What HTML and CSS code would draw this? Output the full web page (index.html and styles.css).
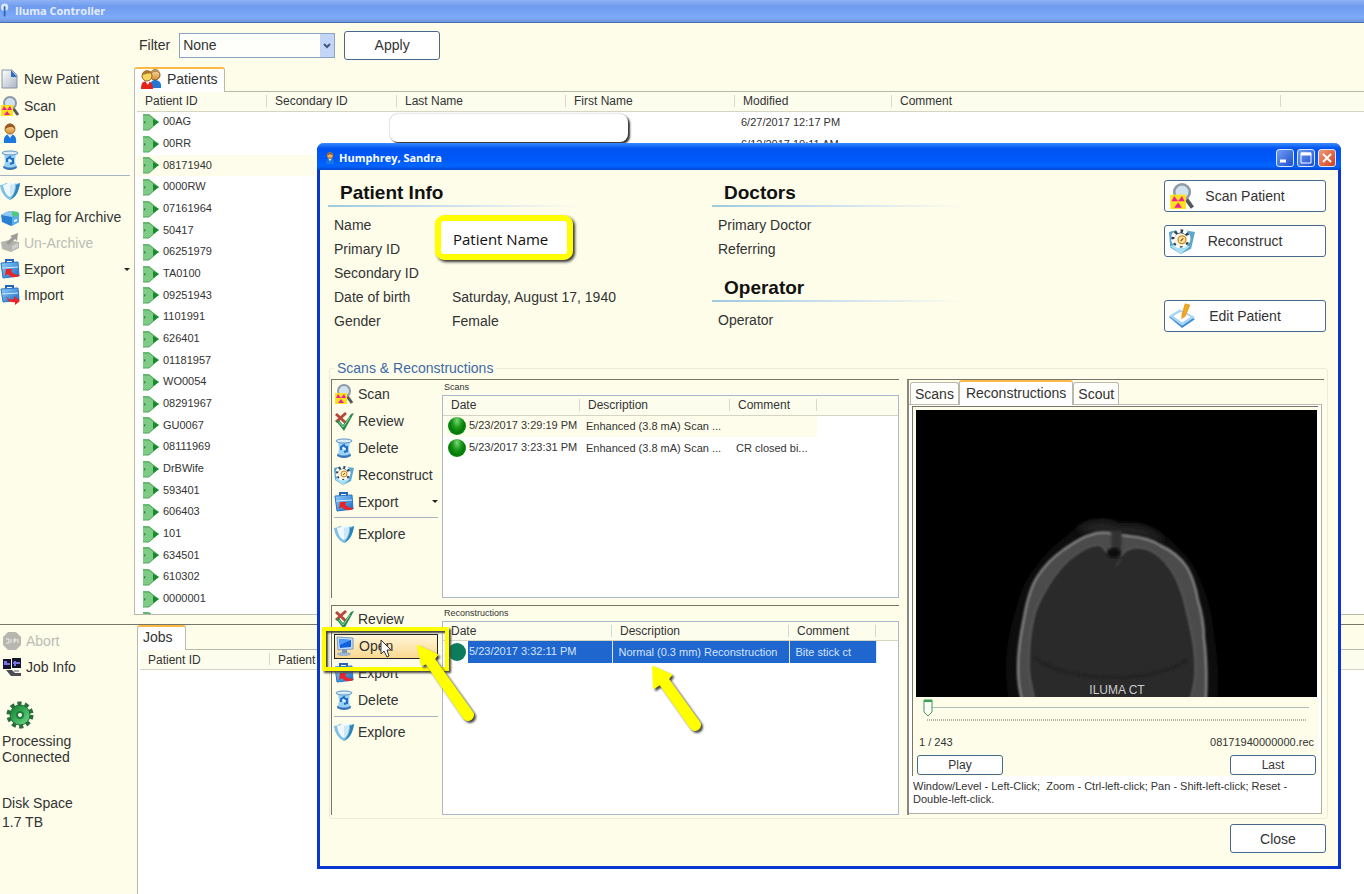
FILE: index.html
```html
<!DOCTYPE html>
<html lang="en">
<head>
  <meta charset="UTF-8">
  <meta name="viewport" content="width=device-width, initial-scale=1.0">
  <title>Iluma Controller</title>
  <link rel="stylesheet" href="styles.css">
</head>
<body>
  <!-- Icon set -->
  <svg class="sprite" aria-hidden="true">
    <defs>
      <linearGradient id="gBlue" x1="0" y1="0" x2="1" y2="1"><stop offset="0" stop-color="#8fd0fb"/><stop offset="1" stop-color="#1668c4"/></linearGradient>
      <linearGradient id="gPale" x1="0" y1="0" x2="1" y2="1"><stop offset="0" stop-color="#ffffff"/><stop offset="1" stop-color="#a9b4c4"/></linearGradient>
      <linearGradient id="gGreen" x1="0" y1="0" x2="1" y2="1"><stop offset="0" stop-color="#0b7a2c"/><stop offset="1" stop-color="#6fe08a"/></linearGradient>
      <linearGradient id="gFace" x1="0" y1="0" x2="0" y2="1"><stop offset="0" stop-color="#fbe0a8"/><stop offset="1" stop-color="#d98e33"/></linearGradient>
      <symbol id="i-new" viewBox="0 0 20 20">
        <path d="M2 1h10l5 5v13H2z" fill="url(#gPale)" stroke="#8c95a5"/>
        <path d="M11 1l6 7h-6z" fill="#2c6fc0"/>
      </symbol>
      <symbol id="i-scan" viewBox="0 0 20 20">
        <path d="M13 12l5 7" stroke="#55565a" stroke-width="3"/>
        <circle cx="10" cy="7" r="6" fill="#cfe2ee" stroke="#8e9aa6" stroke-width="2"/>
        <path d="M1 9h12v11H1z" fill="#ffe21a"/>
        <path d="M2 14l2-4 3 4zM12 14l-2-4-3 4zM4 19l3-4 3 4z" fill="#f01e9a"/>
      </symbol>
      <symbol id="i-person" viewBox="0 0 20 20">
        <path d="M4 20c-1-6 2-9 6-9s7 3 6 9z" fill="#1c78dc"/>
        <path d="M7 11l3 4 3-4z" fill="#e6f2fc"/>
        <circle cx="10" cy="6" r="5" fill="url(#gFace)" stroke="#a0672a"/>
        <path d="M5 6c0-7 10-7 10 0-3-3-6-2-10 0z" fill="#9a5a22"/>
      </symbol>
      <symbol id="i-patients" viewBox="0 0 22 22">
        <path d="M10 20c0-6 2-8 5-8s7 2 6 8z" fill="#2277d4"/>
        <circle cx="15" cy="7" r="5" fill="url(#gFace)" stroke="#7d5426"/>
        <path d="M10 6c1-7 10-6 10 0-3-3-6-2-10 0z" fill="#b9925a"/>
        <path d="M1 21c0-6 2-8 6-8s6 3 6 8z" fill="#e32219"/>
        <path d="M5 13l3 4 2-4z" fill="#fff"/>
        <circle cx="7" cy="8" r="5" fill="#f9d560" stroke="#8a6420"/>
        <path d="M2 7c1-7 10-5 10-1-3-1-6 0-10 1z" fill="#a8762c"/>
      </symbol>
      <symbol id="i-trash" viewBox="0 0 20 20">
        <ellipse cx="10" cy="17" rx="7" ry="3" fill="#3a74b8"/>
        <path d="M4 4h12l-1 7 1 5c-3 2-9 2-12 0l1-5z" fill="#9ad2f5"/>
        <ellipse cx="10" cy="3" rx="8" ry="2" fill="#d8ecf8" stroke="#5a94c4"/>
        <path d="M7 12V9l3-2 1 2h2v4l-3 1" stroke="#1f6fc4" stroke-width="2" fill="none"/>
        <path d="M9 10l2 1" stroke="#fff" stroke-width="2" fill="none"/>
      </symbol>
      <symbol id="i-explore" viewBox="0 0 20 20">
        <path d="M0 4c3 0 4-1 6-2h8c2 1 3 1 6 0-1 8-4 14-10 17C4 16 1 11 0 4z" fill="#7fc0e4"/>
        <path d="M3 4c2 0 3-1 5-2h7c0 6-1 11-5 14C6 14 4 10 3 4z" fill="#eef8fe"/>
        <path d="M10 4l5-1c0 5-2 9-5 12z" fill="#cde7f6"/>
        <path d="M16 4l4-2c-1 8-4 14-10 17 4-5 6-9 6-15z" fill="#2c84b8"/>
      </symbol>
      <symbol id="i-flag" viewBox="0 0 20 20">
        <path d="M1 8l8-4 10 2v9l-8 4-9-4z" fill="#2b7fd2"/>
        <path d="M1 8l8-4 10 2-7 4z" fill="#8dcaf6"/>
        <path d="M12 10l7-4v9l-7 4z" fill="#5aaee9"/>
        <path d="M12 4l6 1v4l-3 1-3-2z" fill="#4fc97a"/>
        <path d="M14 13l3-1v2l-3 1z" fill="#eaf7ff"/>
      </symbol>
      <symbol id="i-unarchive" viewBox="0 0 20 20">
        <path d="M1 9l8-2 10 2v6l-8 4-9-3z" fill="#b4b4ae"/>
        <path d="M6 10l6-6-2-1 8-3-1 8-2-2-6 6z" fill="#9d9d98"/>
        <path d="M12 13l6-3v4l-6 3z" fill="#cfcfc9"/>
      </symbol>
      <symbol id="i-export" viewBox="0 0 20 20">
        <path d="M6 4V1h7v3" fill="none" stroke="#2566b4" stroke-width="2"/>
        <path d="M1 4l17-1 1 14-16 2z" fill="url(#gBlue)" stroke="#2874c8"/>
        <path d="M2 9l16-1" stroke="#cfeaff"/>
        <path d="M6 10h7l-2 2c2 3 5 4 9 4-5 4-10 2-12-1l-3 2z" fill="#ea2424"/>
      </symbol>
      <symbol id="i-import" viewBox="0 0 20 20">
        <path d="M6 4V1h7v3" fill="none" stroke="#2566b4" stroke-width="2"/>
        <path d="M1 4l17-1 1 12-16 2z" fill="url(#gBlue)" stroke="#2874c8"/>
        <path d="M2 9l16-1" stroke="#cfeaff"/>
        <path d="M6 11c2 3 4 4 8 3v-3l6 5-5 4v-3c-5 1-8-2-9-6z" fill="#ea2424"/>
      </symbol>
      <symbol id="i-review" viewBox="0 0 20 20">
        <path d="M2 3l11 10M12 2L2 11" stroke="#b8463a" stroke-width="3" fill="none"/>
        <path d="M2 10l3-1 4 5L17 3l3-1L10 20z" fill="#2a8c4c"/>
        <path d="M5 11l4 5 7-10" stroke="#8ed6a0" stroke-width="1" fill="none"/>
      </symbol>
      <symbol id="i-reconstruct" viewBox="0 0 20 20">
        <path d="M0 3l8-2 12 2-3 13-8 4-8-5z" fill="#5aa6cc"/>
        <path d="M1 14l6-2 9 2-7 6z" fill="#a9e0f4"/>
        <circle cx="9" cy="8" r="7" fill="#2f3e48"/>
        <circle cx="9" cy="8" r="6" fill="none" stroke="#fff" stroke-width="3" stroke-dasharray="3 2"/>
        <circle cx="9" cy="9" r="5" fill="#f8f6ec"/>
        <circle cx="10" cy="9" r="3" fill="#fbe4a6" stroke="#d08a1e" stroke-width="1"/>
        <path d="M9 10l2-2" stroke="#8a5a10"/>
      </symbol>
      <symbol id="i-monitor" viewBox="0 0 20 20">
        <ellipse cx="9" cy="18" rx="7" ry="2" fill="#9db4cc"/>
        <path d="M7 13h5v4H7z" fill="#7a93b4"/>
        <path d="M2 1l16 1v11L3 14z" fill="#c4daf2" stroke="#7c9cc4"/>
        <path d="M4 3l12 1v7L5 12z" fill="#1060e0"/>
        <path d="M4 3l12 1-11 5z" fill="#4f9cf6"/>
      </symbol>
      <symbol id="i-edit" viewBox="0 0 24 24">
        <path d="M0 13l10-6 14 8-12 8z" fill="#3f8cd8"/>
        <path d="M0 12l10-6 14 7-12 8z" fill="#a8d4f6"/>
        <path d="M4 12l7-4 9 5-8 5z" fill="#fff"/>
        <path d="M15 1l4 1-4 10-3 2v-3z" fill="#f4a91c" stroke="#e0a030"/>
      </symbol>
      <symbol id="i-abort" viewBox="0 0 20 20">
        <path d="M6 1h8l5 5v8l-5 5H6l-5-5V6z" fill="#b7b7b0"/>
        <path d="M4 8h3v4H4M9 8v4M12 12V8h2v2h-2M16 12V8" stroke="#ecece4" fill="none"/>
      </symbol>
      <symbol id="i-job" viewBox="0 0 20 20">
        <path d="M1 2h8v10H1zM10 1h9v10h-9z" fill="#15152c"/>
        <path d="M2 7h6M2 5h3M11 6h7M13 4v5" stroke="#7672e8" stroke-width="2"/>
        <path d="M4 13h6l3 3h6v3H9z" fill="#4c4c54"/>
        <path d="M12 13h5v2h-5z" fill="#a8a8b0"/>
      </symbol>
      <symbol id="i-gear" viewBox="0 0 28 28">
        <circle cx="14" cy="14" r="11" fill="none" stroke="#2c6b3c" stroke-width="5" stroke-dasharray="4 3"/>
        <circle cx="14" cy="14" r="10" fill="url(#gGreen)" stroke="#1e6e34"/>
        <circle cx="14" cy="14" r="3" fill="#fff" stroke="#1d7c36" stroke-width="2"/>
      </symbol>
      <symbol id="i-play" viewBox="0 0 16 17">
        <path d="M0 0h6l10 8-10 8H0z" fill="#7ecb86"/>
        <path d="M0 1h6l9 7-9 8H0" fill="none" stroke="#4fa65c"/>
        <path d="M10 5l6 3-6 4z" fill="#168a2c"/>
        <path d="M1 7l2 1-2 2z" fill="#2f8f40"/>
      </symbol>
    </defs>
  </svg>

  <div class="app">
    <header class="app-title">
      <svg class="title-icon" viewBox="0 0 12 16"><circle cx="5" cy="5" r="4" fill="#d7ebff"/><path d="M5 4v11" stroke="#3567b8" stroke-width="2"/></svg>
      <span>Iluma Controller</span>
    </header>

    <section class="pane pane-top">
      <nav class="sidebar">
        <button class="tool"><svg><use href="#i-new"/></svg>New Patient</button>
        <button class="tool"><svg><use href="#i-scan"/></svg>Scan</button>
        <button class="tool"><svg><use href="#i-person"/></svg>Open</button>
        <button class="tool"><svg><use href="#i-trash"/></svg>Delete</button>
        <hr class="tool-sep">
        <button class="tool tight"><svg><use href="#i-explore"/></svg>Explore</button>
        <button class="tool tight"><svg><use href="#i-flag"/></svg>Flag for Archive</button>
        <button class="tool tight" disabled><svg><use href="#i-unarchive"/></svg>Un-Archive</button>
        <button class="tool tight has-menu"><svg><use href="#i-export"/></svg>Export</button>
        <button class="tool tight"><svg><use href="#i-import"/></svg>Import</button>
      </nav>
      <main class="patients">
        <div class="filter-bar">
          <label for="filter">Filter</label>
          <select id="filter" class="filter-select"><option>None</option></select>
          <button class="btn btn-apply">Apply</button>
        </div>
        <div class="tabs">
          <button class="tab active tab-patients"><svg><use href="#i-patients"/></svg>Patients</button>
        </div>
        <div class="list-wrap">
          <table class="list patient-list">
            <colgroup><col class="w130"><col class="w130"><col class="w169"><col class="w169"><col class="w157"><col class="w389"><col></colgroup>
            <thead>
              <tr><th>Patient ID</th><th>Secondary ID</th><th>Last Name</th><th>First Name</th><th>Modified</th><th>Comment</th><th></th></tr>
            </thead>
            <tbody>
              <tr><td><svg><use href="#i-play"/></svg>00AG</td><td></td><td></td><td></td><td>6/27/2017 12:17 PM</td><td></td><td></td></tr>
              <tr><td><svg><use href="#i-play"/></svg>00RR</td><td></td><td></td><td></td><td>6/12/2017 10:11 AM</td><td></td><td></td></tr>
              <tr class="current"><td><svg><use href="#i-play"/></svg>08171940</td><td></td><td></td><td></td><td></td><td></td><td class="rest"></td></tr>
              <tr><td><svg><use href="#i-play"/></svg>0000RW</td></tr>
              <tr><td><svg><use href="#i-play"/></svg>07161964</td></tr>
              <tr><td><svg><use href="#i-play"/></svg>50417</td></tr>
              <tr><td><svg><use href="#i-play"/></svg>06251979</td></tr>
              <tr><td><svg><use href="#i-play"/></svg>TA0100</td></tr>
              <tr><td><svg><use href="#i-play"/></svg>09251943</td></tr>
              <tr><td><svg><use href="#i-play"/></svg>1101991</td></tr>
              <tr><td><svg><use href="#i-play"/></svg>626401</td></tr>
              <tr><td><svg><use href="#i-play"/></svg>01181957</td></tr>
              <tr><td><svg><use href="#i-play"/></svg>WO0054</td></tr>
              <tr><td><svg><use href="#i-play"/></svg>08291967</td></tr>
              <tr><td><svg><use href="#i-play"/></svg>GU0067</td></tr>
              <tr><td><svg><use href="#i-play"/></svg>08111969</td></tr>
              <tr><td><svg><use href="#i-play"/></svg>DrBWife</td></tr>
              <tr><td><svg><use href="#i-play"/></svg>593401</td></tr>
              <tr><td><svg><use href="#i-play"/></svg>606403</td></tr>
              <tr><td><svg><use href="#i-play"/></svg>101</td></tr>
              <tr><td><svg><use href="#i-play"/></svg>634501</td></tr>
              <tr><td><svg><use href="#i-play"/></svg>610302</td></tr>
              <tr><td><svg><use href="#i-play"/></svg>0000001</td></tr>
              <tr><td><svg><use href="#i-play"/></svg></td></tr>
            </tbody>
          </table>
        </div>
      </main>
    </section>

    <section class="pane pane-bottom">
      <aside class="sidebar sidebar-jobs">
        <button class="tool tight" disabled><svg><use href="#i-abort"/></svg>Abort</button>
        <button class="tool tight"><svg><use href="#i-job"/></svg>Job Info</button>
        <svg class="gear"><use href="#i-gear"/></svg>
        <p class="status">Processing<br>Connected</p>
        <p class="disk">Disk Space<br>1.7 TB</p>
      </aside>
      <div class="jobs">
        <div class="tabs">
          <button class="tab active tab-jobs">Jobs</button>
        </div>
        <div class="list-wrap">
          <table class="list">
            <colgroup><col class="w130"><col></colgroup>
            <thead><tr><th>Patient ID</th><th>Patient</th></tr></thead>
          </table>
        </div>
      </div>
    </section>
  </div>

  <div class="redacted"></div>

  <!-- Patient window -->
  <div class="window" role="dialog" aria-labelledby="winTitle">
    <header class="window-title">
      <svg class="window-icon"><use href="#i-person"/></svg>
      <h1 id="winTitle">Humphrey, Sandra</h1>
      <button class="win-btn" aria-label="Minimize"><svg viewBox="0 0 16 16"><path d="M3 11h6" stroke="#fff" stroke-width="3"/></svg></button>
      <button class="win-btn" aria-label="Maximize"><svg viewBox="0 0 16 16"><path d="M3 3h10v10H3z" fill="none" stroke="#fff"/><path d="M3 4h10" stroke="#fff" stroke-width="3"/></svg></button>
      <button class="win-btn win-close" aria-label="Close window"><svg viewBox="0 0 16 16"><path d="M4 4l8 8M12 4l-8 8" stroke="#fff" stroke-width="2"/></svg></button>
    </header>

    <div class="window-body">
      <div class="info">
        <section>
          <h2>Patient Info</h2>
          <dl>
            <dt>Name</dt><dd></dd>
            <dt>Primary ID</dt><dd></dd>
            <dt>Secondary ID</dt><dd></dd>
            <dt>Date of birth</dt><dd>Saturday, August 17, 1940</dd>
            <dt>Gender</dt><dd>Female</dd>
          </dl>
        </section>
        <section>
          <h2>Doctors</h2>
          <dl>
            <dt>Primary Doctor</dt><dd></dd>
            <dt>Referring</dt><dd></dd>
          </dl>
          <h2 class="second">Operator</h2>
          <dl>
            <dt>Operator</dt><dd></dd>
          </dl>
        </section>
        <div class="info-actions">
          <button class="btn btn-icon"><svg><use href="#i-scan"/></svg><span>Scan Patient</span></button>
          <button class="btn btn-icon"><svg><use href="#i-reconstruct"/></svg><span>Reconstruct</span></button>
          <button class="btn btn-icon btn-edit"><svg><use href="#i-edit"/></svg><span>Edit Patient</span></button>
        </div>
      </div>

      <fieldset class="scans">
        <legend>Scans &amp; Reconstructions</legend>
        <div class="lists">
          <div class="panel panel-scans">
            <div class="panel-tools">
              <button class="tool"><svg><use href="#i-scan"/></svg>Scan</button>
              <button class="tool"><svg><use href="#i-review"/></svg>Review</button>
              <button class="tool"><svg><use href="#i-trash"/></svg>Delete</button>
              <button class="tool"><svg><use href="#i-reconstruct"/></svg>Reconstruct</button>
              <button class="tool has-menu"><svg><use href="#i-export"/></svg>Export</button>
              <hr class="tool-sep">
              <button class="tool"><svg><use href="#i-explore"/></svg>Explore</button>
            </div>
            <div class="panel-main">
              <h3>Scans</h3>
              <div class="panel-list">
                <table class="list">
                  <colgroup><col class="w137"><col class="w150"><col class="w87"><col></colgroup>
                  <thead><tr><th>Date</th><th>Description</th><th>Comment</th><th></th></tr></thead>
                  <tbody>
                    <tr class="current"><td><i class="ball"></i>5/23/2017 3:29:19 PM</td><td>Enhanced (3.8 mA) Scan ...</td><td></td><td class="rest"></td></tr>
                    <tr><td><i class="ball"></i>5/23/2017 3:23:31 PM</td><td>Enhanced (3.8 mA) Scan ...</td><td>CR closed bi...</td><td class="rest"></td></tr>
                  </tbody>
                </table>
              </div>
            </div>
          </div>
          <div class="panel panel-recons">
            <div class="panel-tools">
              <button class="tool"><svg><use href="#i-review"/></svg>Review</button>
              <button class="tool hot"><svg><use href="#i-monitor"/></svg>Open</button>
              <button class="tool"><svg><use href="#i-export"/></svg>Export</button>
              <button class="tool"><svg><use href="#i-trash"/></svg>Delete</button>
              <hr class="tool-sep">
              <button class="tool"><svg><use href="#i-explore"/></svg>Explore</button>
            </div>
            <div class="panel-main">
              <h3>Reconstructions</h3>
              <div class="panel-list">
                <table class="list">
                  <colgroup><col class="w169"><col class="w177"><col class="w87"><col></colgroup>
                  <thead><tr><th>Date</th><th>Description</th><th>Comment</th><th></th></tr></thead>
                  <tbody>
                    <tr class="selected"><td><i class="ball"></i>5/23/2017 3:32:11 PM</td><td>Normal (0.3 mm) Reconstruction</td><td>Bite stick ct</td><td class="rest"></td></tr>
                  </tbody>
                </table>
              </div>
            </div>
          </div>
        </div>

        <div class="preview">
          <div class="tabs preview-tabs">
            <button class="tab">Scans</button>
            <button class="tab active">Reconstructions</button>
            <button class="tab">Scout</button>
          </div>
          <div class="preview-page">
            <div class="viewer">
              <svg class="ct" viewBox="0 0 401 287" preserveAspectRatio="xMidYMax slice" role="img" aria-label="CT slice">
                <defs>
                  <filter id="soft"><feGaussianBlur stdDeviation="1"/></filter>
                  <filter id="softer"><feGaussianBlur stdDeviation="3"/></filter>
                </defs>
                <rect width="401" height="287" fill="#000"/>
                <path d="M94 290C90 262 90 235 101 200C106 180 112 168 121 157C131 143 140 135 151 127C160 118 168 112 176 111C188 108 196 110 204 115C216 113 226 114 234 118C248 124 256 132 263 140C274 150 280 162 284 173C290 186 293 198 295 212C299 236 302 262 300 290z" fill="#111" stroke="#1c1c1c" filter="url(#soft)"/>
                <path d="M160 120C170 110 188 107 204 115C222 112 240 118 250 132L214 126H186z" fill="#202020" filter="url(#softer)"/>
                <path d="M106 290C100 270 101 240 108 207C111 190 114 178 121 167C128 156 137 147 147 140C157 133 165 127 174 125C182 122 190 122 198 124L214 126C226 127 236 130 244 135C257 141 265 148 271 157C277 167 280 178 282 190C286 203 288 215 288 227C291 250 291 270 290 290z" fill="#4c4c4c" stroke="#8c8c8c" stroke-width="2" filter="url(#soft)"/>
                <path d="M119 290C115 276 112 262 113 250C113 230 116 211 121 197C127 184 134 172 141 163C149 153 156 147 164 142C171 137 178 135 184 135C188 138 190 142 194 145H206C209 141 212 139 217 138C225 137 232 139 237 142C246 148 252 155 257 163C264 175 268 189 271 203C275 220 279 236 279 252C280 265 278 278 274 290z" fill="#2b2b2b" stroke="#686868" filter="url(#soft)"/>
                <path d="M195 121h11l-1 19h-9z" fill="#303030" filter="url(#soft)"/>
                <ellipse cx="198" cy="143" rx="7" ry="5" fill="#080808" filter="url(#soft)"/>
                <path d="M205 149l-5 7" stroke="#555" filter="url(#soft)"/>
                <path d="M117 247C150 272 232 276 272 250" fill="none" stroke="#232323" stroke-width="3" filter="url(#soft)"/>
                <text x="201" y="284" text-anchor="middle" class="ct-label">ILUMA CT</text>
              </svg>
              <input type="range" class="slice" min="1" max="243" value="1" aria-label="Slice">
              <div class="ticks"></div>
              <div class="viewer-row viewer-info"><span>1 / 243</span><span>08171940000000.rec</span></div>
              <div class="viewer-row"><button class="btn btn-small">Play</button><button class="btn btn-small">Last</button></div>
            </div>
            <p class="hint">Window/Level - Left-Click;&nbsp; Zoom - Ctrl-left-click; Pan - Shift-left-click; Reset -<br>Double-left-click.</p>
          </div>
        </div>
      </fieldset>

      <footer class="window-footer"><button class="btn btn-close">Close</button></footer>
    </div>

    <!-- Callouts drawn over the window -->
    <div class="callout-name">Patient Name</div>
    <div class="callout-box"></div>
    <svg class="cursor" viewBox="0 0 12 19"><path d="M1 1v14l3-3 3 6 2-1-2-6h4z" fill="#fff" stroke="#333"/></svg>
    <svg class="arrow arrow-open" viewBox="0 0 64 84"><path d="M4 4L23 13 20 17 58 70A5 5 0 0 1 50 76L12 21 8 23z" fill="#ff0" stroke="#ff0" stroke-width="2" stroke-linejoin="round"/></svg>
    <svg class="arrow arrow-recon" viewBox="0 0 64 84"><path d="M4 4L22 12 19 16 50 59A5 5 0 0 1 42 65L11 21 5 25z" fill="#ff0" stroke="#ff0" stroke-width="2" stroke-linejoin="round"/></svg>
  </div>
</body>
</html>
```
FILE: styles.css
```css
* {
  box-sizing: border-box;
}

body {
  margin: 0;
  font-family: "Liberation Sans", Arial, sans-serif;
  font-size: 14px;
  color: #333;
  background: #fdfdea;
  overflow: hidden;
}

h1, h2, h3, p, dl, dd {
  margin: 0;
}

button, select {
  font-family: inherit;
  font-size: 14px;
  color: #333;
}

.sprite {
  position: absolute;
  width: 0;
  height: 0;
}

/* Main window */
.app {
  display: flex;
  flex-direction: column;
  height: 100vh;
}

.app-title {
  display: flex;
  align-items: center;
  gap: 4px;
  height: 23px;
  padding-bottom: 2px;
  color: #e4edff;
  font: bold 11px "Open Sans", sans-serif;
  background: linear-gradient(#8fb2f3, #6f9bef 30%, #7eaaf8 80%, #7096dc);
  border-bottom: 1px solid #4a6fae;
}

.title-icon {
  width: 11px;
  height: 16px;
}

.pane {
  display: flex;
  min-height: 0;
  overflow: hidden;
}

.pane-top {
  flex: 602 1 0;
  border-bottom: 1px solid #77756a;
}

.pane-bottom {
  flex: 269 1 0;
}

.sidebar {
  flex: 0 0 134px;
  padding: 42px 4px 0 0;
}

.tool {
  display: flex;
  align-items: center;
  gap: 4px;
  width: 100%;
  height: 27px;
  padding: 0;
  border: 0;
  background: none;
  text-align: left;
  white-space: nowrap;
}

.tool.tight {
  height: 26px;
}

.tool svg {
  flex: none;
  width: 20px;
  height: 20px;
}

.tool:disabled {
  color: #bcbcb4;
}

.tool.has-menu::after {
  content: "";
  margin-left: auto;
  border: 3px solid transparent;
  border-top-color: #222;
  border-bottom: 0;
}

.tool-sep {
  height: 1px;
  margin: 2px 0;
  border: 0;
  background: #a4b4c4;
}

.patients {
  flex: 1;
  min-width: 0;
  display: flex;
  flex-direction: column;
  padding-bottom: 9px;
}

.filter-bar {
  display: flex;
  align-items: center;
  gap: 9px;
  height: 44px;
  padding-left: 5px;
}

.filter-select {
  width: 156px;
  height: 25px;
  padding: 0 3px;
  border: 1px solid #8aa5c4;
  border-radius: 0;
  appearance: none;
  background: url("data:image/svg+xml,%3Csvg xmlns='http://www.w3.org/2000/svg' viewBox='0 0 14 23'%3E%3Crect width='14' height='23' fill='%23c3d6f8'/%3E%3Cpath d='M4 10l3 3 3-3' fill='none' stroke='%23405a80' stroke-width='2'/%3E%3C/svg%3E") right center / 14px 23px no-repeat #fefefa;
}

.btn {
  border: 1px solid #47698c;
  border-radius: 3px;
  background: #fff;
}

.btn-apply {
  width: 96px;
  height: 29px;
}

.tabs {
  display: flex;
  align-items: flex-end;
  height: 25px;
  border-bottom: 1px solid #b9b9ac;
}

.tab {
  display: flex;
  align-items: center;
  height: 22px;
  padding: 0 4px;
  border: 1px solid #b9b9ac;
  border-bottom: 0;
  border-radius: 3px 3px 0 0;
  background: #fefefa;
}

.tab.active {
  height: 25px;
  margin-bottom: -1px;
  border-top: 2px solid #fbba48;
  background: #fff;
}

.tab-patients {
  gap: 5px;
  padding: 0 6px 4px 5px;
}

.tab-patients svg {
  width: 22px;
  height: 22px;
}

.list-wrap {
  flex: 1;
  min-height: 0;
  overflow: hidden;
  padding-left: 2px;
  border-left: 1px solid #b9b9ac;
  background: #fff;
}

.patients .list-wrap {
  border-bottom: 1px solid #b9b9ac;
}

/* Lists */
.list {
  width: 100%;
  table-layout: fixed;
  border-collapse: collapse;
  font-size: 11px;
}

.list th {
  position: relative;
  height: 19px;
  padding: 0 0 0 8px;
  font-size: 12px;
  font-weight: normal;
  line-height: 18px;
  text-align: left;
  white-space: nowrap;
  background: #fdfdee;
  border-bottom: 1px solid #d6d5c2;
}

.list th:not(:last-child)::after {
  content: "";
  position: absolute;
  right: 0;
  top: 3px;
  height: 12px;
  border-right: 1px solid #d8d8cc;
}

.list tbody tr {
  height: 22px;
}

.patient-list tbody tr:nth-child(3n) {
  height: 21px;
}

.list td {
  padding: 0 0 0 6px;
  line-height: 17px;
  white-space: nowrap;
}

.list td svg {
  width: 16px;
  height: 17px;
  margin-right: 4px;
  vertical-align: middle;
}

.list .current td {
  background: #fefdeb;
}

.list .current td.rest {
  background: none;
}

.w87 { width: 87px; }
.w130 { width: 130px; }
.w137 { width: 137px; }
.w150 { width: 150px; }
.w157 { width: 157px; }
.w169 { width: 169px; }
.w177 { width: 177px; }
.w389 { width: 389px; }

.ball {
  display: inline-block;
  width: 18px;
  height: 18px;
  margin: 0 3px 0 -1px;
  border-radius: 50%;
  vertical-align: middle;
  background: radial-gradient(ellipse at 50% 20%, #7fd67a 0, #1d9c1d 35%, #067a0a 60%, #14a014 100%);
}

.selected td {
  color: #d3e4ff;
  background: #1f66cf;
  border-right: 1px solid #dbe7fb;
}

.selected td:first-child {
  background: linear-gradient(90deg, #fff 25px, #1f66cf 25px);
}

.selected td.rest {
  background: none;
  border: 0;
}

.selected .ball {
  background: #0c7c5c;
}

/* Jobs */
.sidebar-jobs {
  flex-basis: 137px;
  padding: 3px 0 0 2px;
}

.gear {
  display: block;
  width: 28px;
  height: 28px;
  margin: 21px 0 0 4px;
}

.status {
  margin-top: 4px;
  line-height: 16px;
}

.disk {
  margin-top: 29px;
  line-height: 19px;
}

.jobs {
  flex: 1;
  min-width: 0;
  display: flex;
  flex-direction: column;
}

.tab-jobs {
  width: 49px;
  padding: 0 5px 4px;
}

/* White strip covering names in the list */
.redacted {
  position: absolute;
  left: 390px;
  top: 114px;
  width: 238px;
  height: 28px;
  border-radius: 8px;
  background: #fff;
  box-shadow: 2px 2px 2px #333, 0 0 2px #aaa;
}

/* Patient window */
.window {
  position: absolute;
  left: 317px;
  right: 23px;
  top: 143px;
  border: 3px solid #0a36d0;
  border-top: 0;
  border-radius: 7px 7px 0 0;
  background: #fdfdea;
}

.window-title {
  display: flex;
  align-items: center;
  gap: 3px;
  height: 27px;
  margin: 0 -3px;
  padding: 2px 5px 0 7px;
  border-radius: 7px 7px 0 0;
  background: linear-gradient(#3a8bff, #0054f0 20%, #0058fa 60%, #0066ff 85%, #0046d8);
}

.window-icon {
  width: 12px;
  height: 14px;
}

.window-title h1 {
  flex: 1;
  color: #fff;
  font: bold 11px "Open Sans", sans-serif;
}

.win-btn {
  width: 18px;
  height: 18px;
  padding: 0;
  border: 1px solid #dbe6ff;
  border-radius: 3px;
  background: linear-gradient(135deg, #6f9cf4, #1f4fd0);
}

.win-btn svg {
  display: block;
  width: 16px;
  height: 16px;
}

.win-close {
  background: linear-gradient(135deg, #f09a78, #d0401c);
}

.window-body {
  padding: 9px 12px 13px 8px;
}

.info {
  display: grid;
  grid-template-columns: 384px 1fr 162px;
}

.info h2 {
  width: 250px;
  height: 28px;
  padding-left: 12px;
  border-bottom: 2px solid;
  border-image: linear-gradient(90deg, #9ccbe0, #cfe0f0 50%, transparent) 1;
  color: #111;
  font-size: 19px;
  line-height: 28px;
}

.info h2.second {
  margin-top: 13px;
}

.info dl {
  display: grid;
  grid-template-columns: 118px 1fr;
  padding: 6px 0 0 6px;
  line-height: 24px;
}

.info-actions {
  display: flex;
  flex-direction: column;
  align-items: stretch;
  gap: 13px;
  padding-top: 1px;
}

.btn-icon {
  display: flex;
  align-items: center;
  height: 32px;
  padding: 0 4px;
}

.btn-icon svg {
  width: 26px;
  height: 26px;
}

.btn-icon span {
  flex: 1;
  padding-right: 26px;
  text-align: center;
}

.btn-edit {
  margin-top: 30px;
}

.scans {
  display: flex;
  gap: 8px;
  min-width: 0;
  margin: 27px -2px 0 1px;
  padding: 2px 3px 3px 1px;
  border: 1px solid #ecebdc;
  border-radius: 3px;
}

.scans legend {
  margin-left: 3px;
  padding: 0 3px;
  color: #3f6aa6;
  line-height: 17px;
}

.lists {
  flex: 1;
  display: flex;
  flex-direction: column;
  gap: 7px;
}

.panel {
  display: grid;
  grid-template-columns: 110px 1fr;
  border-left: 1px solid #77756a;
  border-top: 1px solid #77756a;
}

.panel-scans {
  flex: 219 1 0;
}

.panel-recons {
  flex: 210 1 0;
}

.panel-tools {
  padding: 0 4px 0 2px;
}

.tool.hot {
  height: 25px;
  margin: 1px 0;
  border: 1px solid #222;
  background: linear-gradient(#fff6da, #fbd98e);
}

.panel-main {
  display: flex;
  flex-direction: column;
}

.panel-main h3 {
  padding-left: 2px;
  font-size: 9px;
  font-weight: normal;
  line-height: 15px;
}

.panel-list {
  flex: 1;
  border: 1px solid #a9b9c9;
  background: #fff;
}

/* Preview */
.preview {
  flex: 0 0 417px;
  padding: 0 2px 1px 0;
  border-left: 2px solid #8a887c;
  border-top: 1px solid #77756a;
}

.preview-tabs {
  padding-left: 1px;
}

.preview-tabs .active {
  padding: 0 6px 2px;
}

.preview-page {
  padding: 1px 3px 7px;
  border-right: 1px solid #b0b0a4;
  border-bottom: 1px solid #b0b0a4;
  background: #fff;
}

.viewer {
  padding: 3px 1px 1px 3px;
  border-left: 1px solid #77756a;
  border-top: 1px solid #77756a;
  background: #fdfdea;
}

.ct {
  display: block;
  width: 100%;
  height: 287px;
}

.ct-label {
  fill: #ccc;
  font-size: 12px;
}

.slice {
  display: block;
  width: calc(100% - 15px);
  height: 20px;
  margin: 1px 0 0 7px;
  appearance: none;
  background: linear-gradient(#b4bcbc, #b4bcbc) 0 9px / 100% 1px no-repeat;
}

.slice::-webkit-slider-thumb {
  appearance: none;
  width: 10px;
  height: 18px;
  background: url("data:image/svg+xml,%3Csvg xmlns='http://www.w3.org/2000/svg' viewBox='0 0 10 18'%3E%3Cpath d='M1 1h8v12l-4 4-4-4z' fill='%23fbfdf6' stroke='%233f9b5c'/%3E%3Cpath d='M1 2h8' stroke='%2335a650' stroke-width='2'/%3E%3C/svg%3E") no-repeat;
}

.ticks {
  height: 2px;
  margin: 1px 11px 0;
  background: repeating-linear-gradient(90deg, #b4b4a8 0 1px, transparent 1px 2px);
}

.viewer-row {
  display: flex;
  justify-content: space-between;
  padding: 0 1px;
  font-size: 11px;
}

.viewer-info {
  padding: 14px 3px 6px;
  line-height: 14px;
}

.btn-small {
  width: 86px;
  height: 20px;
  padding: 0;
  font-size: 12px;
}

.hint {
  padding: 4px 0 0 1px;
  font-size: 11px;
  line-height: 13px;
  white-space: nowrap;
}

.window-footer {
  display: flex;
  justify-content: flex-end;
  padding-top: 5px;
}

.btn-close {
  width: 96px;
  height: 29px;
}

/* Callouts */
.callout-name {
  position: absolute;
  left: 115px;
  top: 72px;
  width: 138px;
  height: 45px;
  padding-left: 12px;
  border: 6px solid #ff0;
  border-radius: 9px;
  background: #fff;
  color: #111;
  font: 15px/37px "Open Sans", sans-serif;
  box-shadow: 2px 2px 3px #333;
}

.callout-box {
  position: absolute;
  left: 2px;
  top: 484px;
  width: 127px;
  height: 44px;
  border: 4px solid #ff0;
  box-shadow: 2px 2px 2px #444, inset 2px 2px 2px #444;
}

.cursor {
  position: absolute;
  left: 60px;
  top: 496px;
  width: 12px;
  height: 19px;
}

.arrow {
  position: absolute;
  width: 64px;
  height: 84px;
  filter: drop-shadow(2px 2px 1px #444);
}

.arrow-open {
  left: 94px;
  top: 499px;
}

.arrow-recon {
  left: 329px;
  top: 520px;
}
```
